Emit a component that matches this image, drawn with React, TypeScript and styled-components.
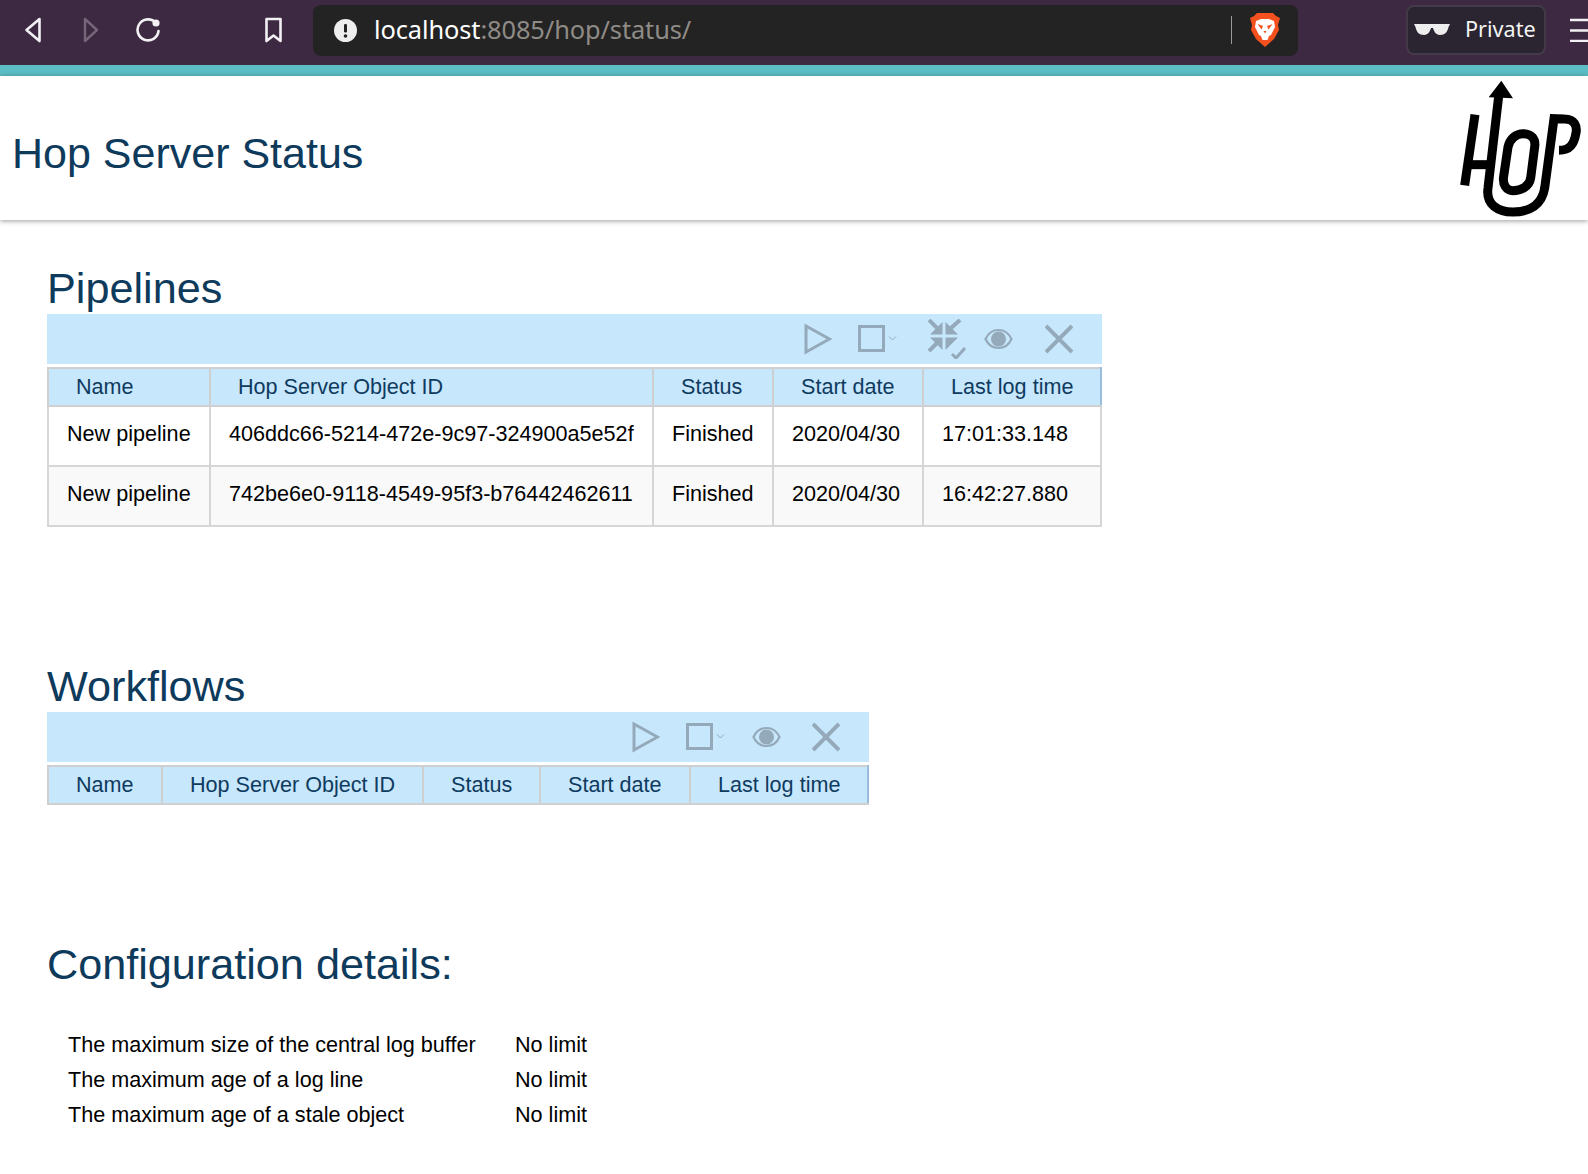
import React from 'react';
import styled, { createGlobalStyle } from 'styled-components';

const GlobalStyle = createGlobalStyle`
  html, body {
    margin: 0;
    padding: 0;
    background: #fff;
    font-family: "Liberation Sans", Arial, sans-serif;
  }
`;

const Page = styled.div`
  width: 1588px;
  height: 1174px;
  overflow: hidden;
`;

const BrowserBar = styled.div`
  display: flex;
  align-items: center;
  height: 60px;
  padding-bottom: 5px;
  background: #3d2a42;
  border-bottom: 11px solid #5cbec4;
  overflow: hidden;
`;

const NavIcon = styled.svg<{ $left: number; $size: number }>`
  flex: none;
  width: ${(p) => p.$size}px;
  height: 26px;
  margin-left: ${(p) => p.$left}px;
`;

const AddressBar = styled.div`
  display: flex;
  align-items: center;
  flex: none;
  width: 985px;
  height: 51px;
  margin-left: 30px;
  padding-left: 21px;
  box-sizing: border-box;
  background: #232323;
  border-radius: 8px;
  font-family: "Noto Sans", sans-serif;
  font-size: 25.4px;
`;

const InfoIcon = styled.svg`
  flex: none;
  width: 23px;
  height: 23px;
`;

const Url = styled.div`
  flex: 1;
  margin-left: 17px;
  padding-bottom: 3px;
  color: #8f8b86;
  letter-spacing: -0.1px;

  b {
    font-weight: 400;
    color: #fff;
  }
`;

const Divider = styled.div`
  width: 1px;
  height: 28px;
  background: #9a9a9a;
`;

const BraveIcon = styled.svg`
  flex: none;
  width: 30px;
  height: 34px;
  margin: 0 18px 0 18px;
`;

const PrivateBadge = styled.div`
  display: flex;
  align-items: center;
  flex: none;
  width: 140px;
  height: 50px;
  margin-left: 108px;
  padding: 0 0 3px 6px;
  box-sizing: border-box;
  background: #2a2530;
  border: 2px solid #433a47;
  border-radius: 8px;
  color: #f4f4f4;
  font-family: "Noto Sans", sans-serif;
  font-size: 21.6px;

  svg {
    flex: none;
    width: 36px;
    height: 12px;
    margin-right: 15px;
  }
`;

const Menu = styled.svg`
  flex: none;
  width: 18px;
  height: 24px;
  margin-left: 24px;
`;

const Header = styled.header`
  display: flex;
  align-items: center;
  justify-content: space-between;
  position: relative;
  height: 144px;
  padding: 0 5px 0 12px;
  background: #fff;
  box-shadow: 0 1px 5px rgba(0, 0, 0, 0.4);
`;

const PageTitle = styled.h1`
  margin: 10px 0 0;
  color: #0e3a5c;
  font-size: 43px;
  font-weight: 400;
  line-height: 50px;
`;

const Logo = styled.svg`
  width: 125px;
  height: 140px;
`;

const Main = styled.main`
  padding: 44px 0 0 47px;
`;

const Section = styled.section<{ $width: number; $bottom: number }>`
  width: ${(p) => p.$width}px;
  margin-bottom: ${(p) => p.$bottom}px;
`;

const Heading = styled.h2`
  margin: 0 0 2px;
  color: #0e3a5c;
  font-size: 43.2px;
  font-weight: 400;
  line-height: 48px;
  white-space: nowrap;
`;

const Toolbar = styled.div`
  display: flex;
  align-items: center;
  justify-content: flex-end;
  height: 50px;
  padding-right: 29px;
  background: #c7e7fc;
`;

const ToolIcon = styled.svg<{ $gap: number; $width: number }>`
  flex: none;
  width: ${(p) => p.$width}px;
  height: 40px;
  margin-left: ${(p) => p.$gap}px;
`;

const Table = styled.table`
  width: calc(100% - 2px);
  margin-top: 3px;
  table-layout: fixed;
  border-collapse: collapse;
  font-size: 21.6px;
`;

const Th = styled.th`
  height: 38px;
  padding: 0 0 1px 27px;
  box-sizing: border-box;
  background: #c7e7fc;
  border: 2px solid #cfcfcf;
  color: #0f3b5f;
  font-weight: 400;
  text-align: left;
  white-space: nowrap;

  &:last-child {
    border-right-color: #9bbcdc;
  }
`;

const Td = styled.td`
  height: 60px;
  padding: 0 0 5px 18px;
  box-sizing: border-box;
  border: 2px solid #d6d6d6;
  color: #000;
  white-space: nowrap;

  tr:nth-child(even) & {
    background: #f9f9f9;
  }
`;

const ConfigHeading = styled(Heading)`
  margin-bottom: 39px;
`;

const ConfigList = styled.div`
  display: grid;
  grid-template-columns: 447px auto;
  grid-auto-rows: 35px;
  align-items: center;
  width: 700px;
  padding-left: 21px;
  font-size: 21.6px;
  color: #000;
`;

const pipelines = [
  ['New pipeline', '406ddc66-5214-472e-9c97-324900a5e52f', 'Finished', '2020/04/30', '17:01:33.148'],
  ['New pipeline', '742be6e0-9118-4549-95f3-b76442462611', 'Finished', '2020/04/30', '16:42:27.880'],
];

const columns = ['Name', 'Hop Server Object ID', 'Status', 'Start date', 'Last log time'];

const config = [
  'The maximum size of the central log buffer',
  'The maximum age of a log line',
  'The maximum age of a stale object',
];

const iconColor = '#94a9b9';

function Play({ gap }: { gap: number }) {
  return (
    <ToolIcon $gap={gap} $width={28} viewBox="0 0 28 40">
      <path d="M2 7 L25.5 20 L2 33 Z" fill="none" stroke={iconColor} strokeWidth="3" />
    </ToolIcon>
  );
}

function Stop({ gap }: { gap: number }) {
  return (
    <ToolIcon $gap={gap} $width={40} viewBox="0 0 40 40">
      <rect x="1.5" y="7.5" width="24" height="24" fill="none" stroke={iconColor} strokeWidth="3" />
      <path d="M31 17.5 L34.5 21 L38 17.5" fill="none" stroke={iconColor} strokeWidth="1" />
    </ToolIcon>
  );
}

function Compress({ gap }: { gap: number }) {
  return (
    <ToolIcon $gap={gap} $width={38} viewBox="0 0 38 40">
      <g fill={iconColor}>
        <path d="M14.5 3 V15.5 H2 Z" />
        <path d="M17.5 3 V15.5 H30 Z" />
        <path d="M2 18.5 H14.5 V31 Z" />
        <path d="M17.5 18.5 H30 L17.5 31 Z" />
      </g>
      <g fill="none" stroke={iconColor}>
        <path d="M1 1 L9 9 M32 1 L23 9 M9 24 L1 32" strokeWidth="4" />
        <path d="M24 35 L28 39 L37 29" strokeWidth="3" />
      </g>
    </ToolIcon>
  );
}

function Eye({ gap }: { gap: number }) {
  return (
    <ToolIcon $gap={gap} $width={29} viewBox="0 0 29 40">
      <path d="M1.5 20 C7 8 22 8 27.5 20 C22 32 7 32 1.5 20 Z" fill="none" stroke={iconColor} strokeWidth="2.2" />
      <circle cx="14.5" cy="20" r="7.5" fill={iconColor} />
    </ToolIcon>
  );
}

function Close({ gap }: { gap: number }) {
  return (
    <ToolIcon $gap={gap} $width={28} viewBox="0 0 28 40">
      <path d="M1 7 L27 33 M27 7 L1 33" fill="none" stroke={iconColor} strokeWidth="4" />
    </ToolIcon>
  );
}

function HopLogo() {
  return (
    <Logo viewBox="810 230 375 420">
      <g fill="none" stroke="#000" strokeWidth="27">
        <path d="M861 340 L830 552" />
        <path d="M845 490 L915 490" />
        <path d="M932 285 L900 560 C893 610 930 632 975 632 C1025 632 1062 610 1070 560 L1098 352 L1130 353 C1160 353 1168 375 1164 395 C1158 430 1145 447 1113 447" />
        <path d="M1005 397 C1030 397 1044 412 1040 437 L1028 530 C1024 555 1000 568 975 568 C955 568 943 550 947 525 L960 437 C965 412 985 397 1005 397 Z" />
      </g>
      <path d="M940 238 L975 291 L902 288 Z" fill="#000" />
    </Logo>
  );
}

function App() {
  return (
    <Page>
      <GlobalStyle />
      <BrowserBar>
        <NavIcon $left={24} $size={18} viewBox="0 0 18 26">
          <path d="M15.5 2 L2.5 13 L15.5 24 Z" fill="none" stroke="#f2f0f3" strokeWidth="2.6" strokeLinejoin="round" />
        </NavIcon>
        <NavIcon $left={41} $size={16} viewBox="0 0 16 26">
          <path d="M2 2 L14 13 L2 24 Z" fill="none" stroke="#75667a" strokeWidth="2.4" strokeLinejoin="round" />
        </NavIcon>
        <NavIcon $left={37} $size={24} viewBox="0 0 24 26">
          <path d="M20 6 A10.5 10.5 0 1 0 22.5 14" fill="none" stroke="#f2f0f3" strokeWidth="2.6" strokeLinecap="round" />
          <circle cx="20" cy="6" r="3.6" fill="#f2f0f3" />
        </NavIcon>
        <NavIcon $left={104} $size={19} viewBox="0 0 19 26">
          <path d="M2.5 2 H16.5 V24 L9.5 18.5 L2.5 24 Z" fill="none" stroke="#f2f0f3" strokeWidth="2.6" strokeLinejoin="round" />
        </NavIcon>
        <AddressBar>
          <InfoIcon viewBox="0 0 23 23">
            <circle cx="11.5" cy="11.5" r="11.5" fill="#eeeeee" />
            <rect x="10" y="5" width="3" height="8.5" rx="1.2" fill="#232323" />
            <circle cx="11.5" cy="17" r="1.8" fill="#232323" />
          </InfoIcon>
          <Url>
            <b>localhost</b>:8085/hop/status/
          </Url>
          <Divider />
          <BraveIcon viewBox="0 0 30 34">
            <path d="M7 0 H23 L26 3 L30 5 L28 12 L29 17 L24 26 L15 34 L6 26 L1 17 L2 12 L0 5 L4 3 Z" fill="#f4511e" />
            <path d="M6 8 L11 6 H19 L24 8 L25 14 L21 22 L19 23 L17.5 27 H12.5 L11 23 L9 22 L5 14 Z" fill="#fff" />
            <path d="M7.5 11 L13 13 L11.5 16.5 Z M22.5 11 L17 13 L18.5 16.5 Z M13.5 18 H16.5 L15 20.5 Z" fill="#f4511e" />
          </BraveIcon>
        </AddressBar>
        <PrivateBadge>
          <svg viewBox="0 0 36 12">
            <path d="M0 1 H36 L34.5 4 C33.5 9 31 12 26 12 C21.5 12 20 8 19 5 H17 C16 8 14.5 12 10 12 C5 12 2.5 9 1.5 4 Z" fill="#eeeeee" />
          </svg>
          Private
        </PrivateBadge>
        <Menu viewBox="0 0 18 24">
          <path d="M0 2 H18 M0 12.5 H18 M0 23 H18" stroke="#f2f0f3" strokeWidth="2.4" />
        </Menu>
      </BrowserBar>

      <Header>
        <PageTitle>Hop Server Status</PageTitle>
        <HopLogo />
      </Header>

      <Main>
        <Section $width={1055} $bottom={135}>
          <Heading>Pipelines</Heading>
          <Toolbar>
            <Play gap={0} />
            <Stop gap={26} />
            <Compress gap={30} />
            <Eye gap={18} />
            <Close gap={32} />
          </Toolbar>
          <Table>
            <colgroup>
              <col width={162} />
              <col width={443} />
              <col width={120} />
              <col width={150} />
              <col width={178} />
            </colgroup>
            <thead>
              <tr>
                {columns.map((c) => (
                  <Th key={c}>{c}</Th>
                ))}
              </tr>
            </thead>
            <tbody>
              {pipelines.map((row) => (
                <tr key={row[1]}>
                  {row.map((v, idx) => (
                    <Td key={idx}>{v}</Td>
                  ))}
                </tr>
              ))}
            </tbody>
          </Table>
        </Section>

        <Section $width={822} $bottom={135}>
          <Heading>Workflows</Heading>
          <Toolbar>
            <Play gap={0} />
            <Stop gap={26} />
            <Eye gap={26} />
            <Close gap={31} />
          </Toolbar>
          <Table>
            <colgroup>
              <col width={114} />
              <col width={261} />
              <col width={117} />
              <col width={150} />
              <col width={178} />
            </colgroup>
            <thead>
              <tr>
                {columns.map((c) => (
                  <Th key={c}>{c}</Th>
                ))}
              </tr>
            </thead>
          </Table>
        </Section>

        <Section $width={822} $bottom={0}>
          <ConfigHeading>Configuration details:</ConfigHeading>
          <ConfigList>
            {config.map((c) => (
              <React.Fragment key={c}>
                <div>{c}</div>
                <div>No limit</div>
              </React.Fragment>
            ))}
          </ConfigList>
        </Section>
      </Main>
    </Page>
  );
}

export default App;
